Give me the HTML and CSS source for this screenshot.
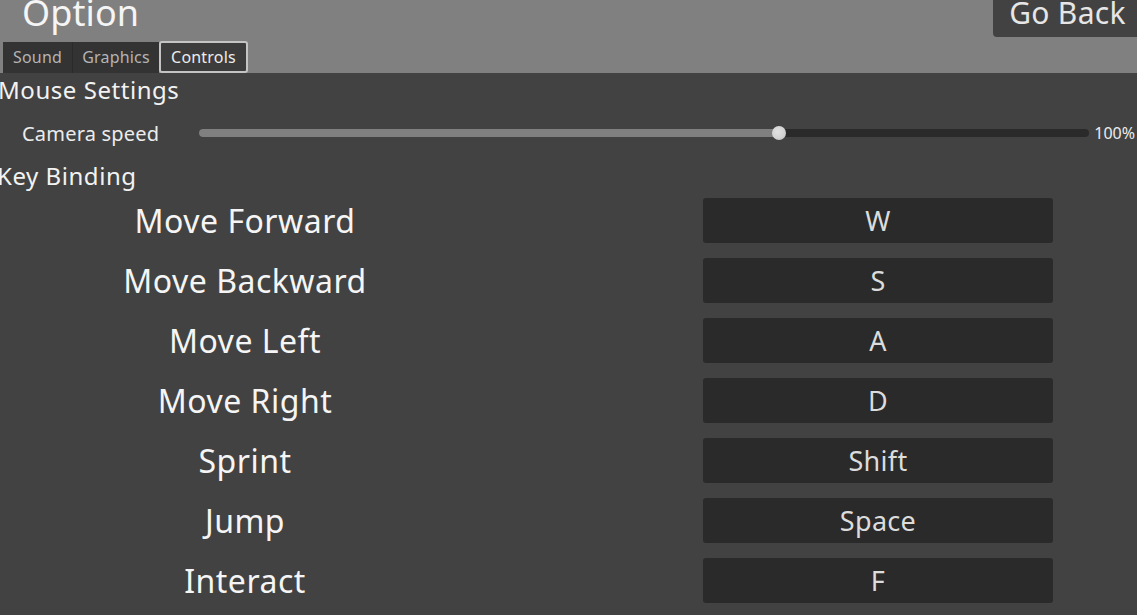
FILE: index.html
```html
<!DOCTYPE html>
<html>
<head>
<meta charset="utf-8">
<link rel="stylesheet" href="styles.css">
</head>
<body>
<div class="screen">
  <header class="header">
    <div class="header-left">
      <div class="title">Option</div>
      <div class="tabs">
        <div class="tab">Sound</div>
        <div class="tab tab-sep">Graphics</div>
        <div class="tab tab-active">Controls</div>
      </div>
    </div>
    <div class="back-btn">Go Back</div>
  </header>
  <main class="content">
    <div class="section-title">Mouse Settings</div>
    <div class="slider-row">
      <div class="slider-label">Camera speed</div>
      <div class="slider">
        <div class="slider-track">
          <div class="slider-fill" style="width: 65.2%"></div>
        </div>
        <div class="slider-grab" style="left: 65.2%"></div>
      </div>
      <div class="slider-value">100%</div>
    </div>
    <div class="section-title key-title">Key Binding</div>
    <div class="bindings">
      <div class="bind-label">Move Forward</div><div class="bind-btn">W</div>
      <div class="bind-label">Move Backward</div><div class="bind-btn">S</div>
      <div class="bind-label">Move Left</div><div class="bind-btn">A</div>
      <div class="bind-label">Move Right</div><div class="bind-btn">D</div>
      <div class="bind-label">Sprint</div><div class="bind-btn">Shift</div>
      <div class="bind-label">Jump</div><div class="bind-btn">Space</div>
      <div class="bind-label">Interact</div><div class="bind-btn">F</div>
    </div>
  </main>
</div>
</body>
</html>
```
FILE: styles.css
```css
* { box-sizing: border-box; margin: 0; padding: 0; }
html, body {
  width: 1137px;
  height: 615px;
  overflow: hidden;
  background: #424242;
  font-family: "Noto Sans", "Open Sans", sans-serif;
  color: #f2f2f2;
}
.screen {
  width: 1137px;
  height: 615px;
  display: flex;
  flex-direction: column;
}
.header {
  height: 73px;
  background: #808080;
  display: flex;
  justify-content: space-between;
  align-items: flex-start;
}
.header-left {
  display: flex;
  flex-direction: column;
}
.title {
  font-size: 36px;
  line-height: 36px;
  letter-spacing: 0.1px;
  margin-top: -5px;
  margin-bottom: 11px;
  padding-left: 22px;
  color: #f5f5f5;
}
.tabs {
  display: flex;
  padding-left: 3px;
  height: 31px;
}
.tab {
  height: 31px;
  line-height: 31px;
  font-size: 16px;
  letter-spacing: 0.2px;
  background: #333333;
  color: #b4b4b4;
  text-align: center;
  width: 69px;
}
.tab-sep {
  border-left: 1px solid #2b2b2b;
  width: 87px;
}
.tab-active {
  background: #3c3c3c;
  color: #ececec;
  border: 2px solid #c4c4c4;
  border-radius: 3px;
  margin-top: -1px;
  height: 32px;
  line-height: 28px;
  width: 89px;
}
.back-btn {
  width: 144px;
  height: 37px;
  background: #424242;
  border-bottom-left-radius: 4px;
  font-size: 30px;
  line-height: 25px;
  letter-spacing: 0.3px;
  text-align: center;
  color: #e6e6e6;
  padding-left: 5px;
}
.content {
  flex: 1;
  display: flex;
  flex-direction: column;
}
.section-title {
  font-size: 24px;
  line-height: 33px;
  letter-spacing: 0.55px;
  margin-left: -2px;
  color: #f2f2f2;
}
.key-title {
  line-height: 27px;
  padding-top: 2px;
  height: 29px;
  margin-left: -3px;
}
.slider-row {
  height: 54px;
  display: flex;
  align-items: center;
  padding-left: 22px;
  padding-right: 2px;
}
.slider-label {
  width: 177px;
  font-size: 20px;
  letter-spacing: 0.2px;
  color: #ececec;
}
.slider {
  flex: 1;
  position: relative;
  height: 14px;
  display: flex;
  align-items: center;
}
.slider-track {
  width: 100%;
  height: 8px;
  border-radius: 4px;
  background: #2a2a2a;
  overflow: hidden;
}
.slider-fill {
  height: 100%;
  background: #808080;
}
.slider-grab {
  position: absolute;
  top: 0;
  width: 14px;
  height: 14px;
  margin-left: -7px;
  border-radius: 50%;
  background: radial-gradient(circle at 40% 40%, #e2e2e2 0%, #d4d4d4 55%, #b8b8b8 100%);
}
.slider-value {
  margin-left: 5px;
  font-size: 16px;
  color: #ececec;
}
.bindings {
  margin-top: 9px;
  display: grid;
  grid-template-columns: 490px 350px;
  column-gap: 213px;
  row-gap: 15px;
  grid-auto-rows: 45px;
}
.bind-label {
  font-size: 32px;
  line-height: 45px;
  letter-spacing: 0.5px;
  text-align: center;
  color: #f5f5f5;
}
.bind-btn {
  background: #2a2a2a;
  border-radius: 3px;
  font-size: 27px;
  line-height: 45px;
  letter-spacing: 0.3px;
  text-align: center;
  color: #dcdcdc;
}
```
